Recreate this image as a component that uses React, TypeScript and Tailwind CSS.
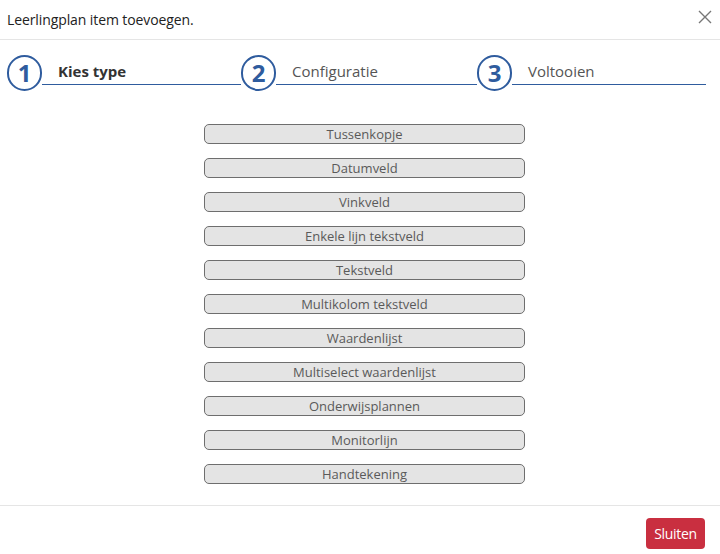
const ITEMS = [
  "Tussenkopje",
  "Datumveld",
  "Vinkveld",
  "Enkele lijn tekstveld",
  "Tekstveld",
  "Multikolom tekstveld",
  "Waardenlijst",
  "Multiselect waardenlijst",
  "Onderwijsplannen",
  "Monitorlijn",
  "Handtekening",
];

const STEPS = [
  { n: 1, label: "Kies type", active: true, w: "w-[234px]" },
  { n: 2, label: "Configuratie", active: false, w: "w-[236px]" },
  { n: 3, label: "Voltooien", active: false, w: "flex-1" },
];

export default function App() {
  return (
    <div className="flex h-[554px] w-[720px] flex-col bg-white font-['Open_Sans',sans-serif] text-[#333]">
      <div className="flex h-[40px] items-center justify-between border-b border-[#e5e5e5] pl-[7px] pr-[7px]">
        <h4 className="text-[14px] tracking-[-0.1px] text-[#222]">Leerlingplan item toevoegen.</h4>
        <svg width="14" height="14" viewBox="0 0 14 14" className="mr-[1px] mt-[-6px]">
          <path d="M1 1 L13 13 M13 1 L1 13" stroke="#777" strokeWidth="1.4" />
        </svg>
      </div>

      <div className="flex pl-[7px] pr-[14px] pt-[15px]">
        {STEPS.map((s) => (
          <div key={s.n} className={`flex items-end ${s.w}`}>
            <div className="flex h-[36px] w-[35px] shrink-0 items-center justify-center rounded-full border-2 border-[#2f5c9e] text-[24px] font-bold leading-none text-[#2f5c9e]">
              {s.n}
            </div>
            <div className="mb-[6px] flex-1 border-b-[1.5px] border-[#2f5c9e] pb-[1px] pl-[16px]">
              <span
                className={
                  s.active
                    ? "text-[15px] font-bold text-[#333]"
                    : "text-[15px] text-[#555]"
                }
              >
                {s.label}
              </span>
            </div>
          </div>
        ))}
      </div>

      <div className="flex flex-1 flex-col items-center gap-[14px] pl-[9px] pt-[33px]">
        {ITEMS.map((item) => (
          <button
            key={item}
            className="h-[20px] w-[321px] rounded-[5px] border border-[#6e6e6e] bg-[#e4e4e4] text-[13px] leading-none text-[#5a5a5a]"
          >
            {item}
          </button>
        ))}
      </div>

      <div className="flex h-[49px] items-start justify-end border-t border-[#e5e5e5] pr-[15px] pt-[12px]">
        <button className="h-[31px] w-[59px] rounded-[4px] bg-[#c92f40] text-[14px] tracking-[-0.3px] text-white">
          Sluiten
        </button>
      </div>
    </div>
  );
}
